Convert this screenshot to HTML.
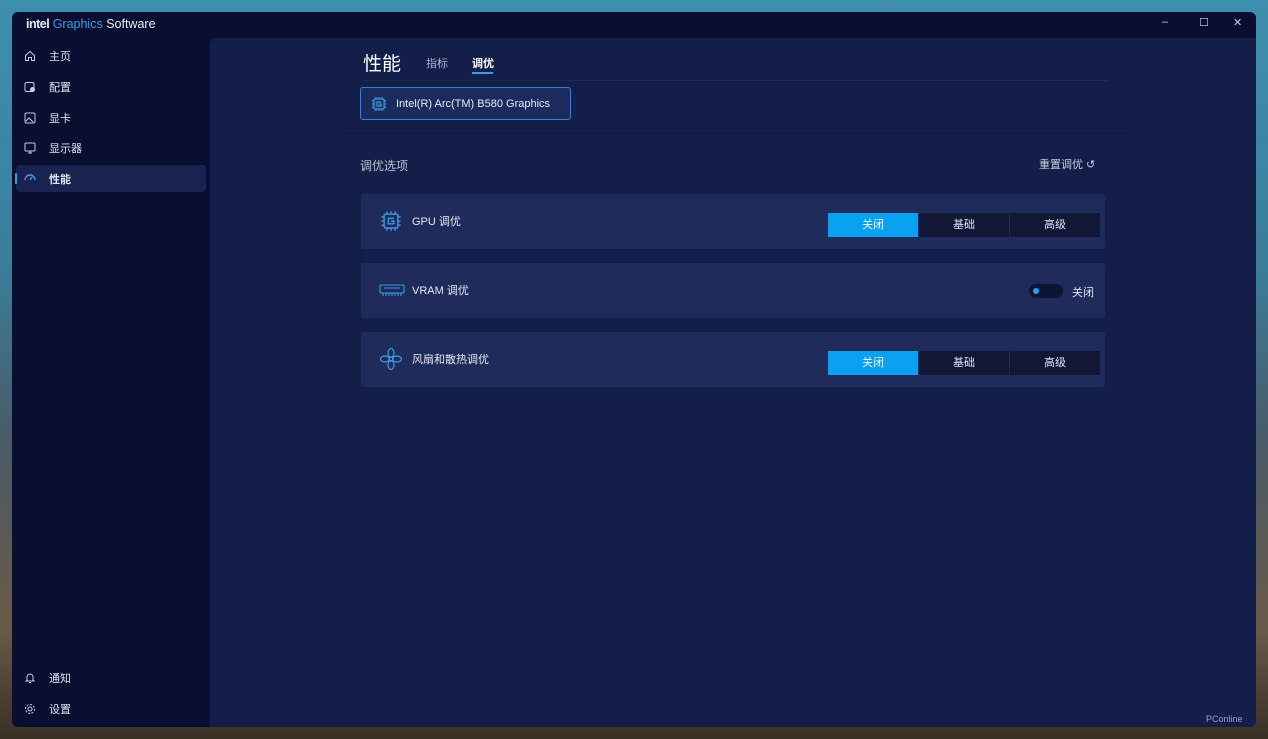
<!DOCTYPE html><html><head><meta charset="utf-8"><style>
*{margin:0;padding:0;box-sizing:border-box}
body{width:1268px;height:739px;overflow:hidden;position:relative;font-family:"Liberation Sans","Noto Sans CJK SC",sans-serif;background:linear-gradient(180deg,#3f8fb0 0%,#3a7f9c 35%,#4a5a66 60%,#6a5a48 85%,#3a3026 100%)}
.win{position:absolute;left:12px;top:12px;width:1244px;height:715px;background:#0a0e30;border-radius:6px;overflow:hidden}
.title{position:absolute;left:14px;top:5px;font-size:12.5px;color:#e8ecf5}
.title b{font-weight:bold;letter-spacing:-0.5px}.title span{color:#3d9be8}
.ctl{position:absolute;top:4px;color:#c8cfe0;font-size:11px}
.main{position:absolute;left:198px;top:26px;width:1046px;height:689px;background:#141f49;border-top-left-radius:6px}
.nav{position:absolute;left:4px;width:190px;height:27px;display:flex;align-items:center;font-size:11px;color:#dfe4f0;border-radius:4px}
.nav svg{position:absolute;left:8px}
.nav span{position:absolute;left:33px;top:6px}
.card{position:absolute;left:151px;width:744px;height:55px;background:#1f2b5b;border-radius:3px}
.card .lbl{position:absolute;left:51px;top:19px;font-size:11px;color:#e4e8f2}
.seg{position:absolute;left:467px;top:19px;display:flex}
.seg div{width:90px;height:24px;line-height:24px;text-align:center;font-size:11px;color:#dfe4f0;background:#111735;margin-right:1px}
.seg div.on{background:#0ba1f3;color:#fff}
</style></head><body>
<div class="win">
<div class="title"><b>intel</b> <span>Graphics</span> Software</div>
<div class="ctl" style="left:1150px">–</div>
<div class="ctl" style="left:1187px">☐</div>
<div class="ctl" style="left:1221px">✕</div>
<div class="nav" style="top:30px"><svg width="12" height="12" viewBox="0 0 12 12" fill="none" stroke="#c8cfe0"><path d="M1.5 5.5L6 1.5l4.5 4v5h-3v-3h-3v3h-3z"/></svg><span>主页</span></div>
<div class="nav" style="top:61px"><svg width="12" height="12" viewBox="0 0 12 12" fill="none" stroke="#c8cfe0"><rect x="1" y="1.5" width="9" height="9" rx="1.5"/><circle cx="8.5" cy="8.5" r="2" fill="#c8cfe0"/></svg><span>配置</span></div>
<div class="nav" style="top:92px"><svg width="12" height="12" viewBox="0 0 12 12" fill="none" stroke="#c8cfe0"><rect x="1" y="1" width="10" height="10" rx="1.5"/><path d="M2 9l3-3 4 4"/></svg><span>显卡</span></div>
<div class="nav" style="top:122px"><svg width="12" height="12" viewBox="0 0 12 12" fill="none" stroke="#c8cfe0"><rect x="1" y="1" width="10" height="8" rx="1"/><path d="M6 9v2M4 11h4"/></svg><span>显示器</span></div>
<div class="nav" style="top:153px;background:#1a2250"><div style="position:absolute;left:-1px;top:8px;width:2px;height:11px;background:#3d9be8;border-radius:1px"></div><svg width="12" height="12" viewBox="0 0 12 12" fill="none" stroke="#3d9be8" stroke-width="1.4"><path d="M1 7a5 5 0 0 1 10 0M6 7l2-3"/></svg><span style="font-weight:bold">性能</span></div>
<div class="nav" style="top:652px"><svg width="12" height="12" viewBox="0 0 12 12" fill="none" stroke="#c8cfe0"><path d="M3 8V5a3 3 0 0 1 6 0v3l1 1H2zM5 10.5h2"/></svg><span>通知</span></div>
<div class="nav" style="top:683px"><svg width="12" height="12" viewBox="0 0 12 12" fill="none" stroke="#c8cfe0"><circle cx="6" cy="6" r="2"/><circle cx="6" cy="6" r="4.5" stroke-dasharray="2 1.5"/></svg><span>设置</span></div>
<div class="main">
<div style="position:absolute;left:153px;top:11px;font-size:19px;color:#fff">性能</div>
<div style="position:absolute;left:216px;top:17px;font-size:11px;color:#aab3cc">指标</div>
<div style="position:absolute;left:262px;top:17px;font-size:11px;color:#fff;font-weight:bold">调优</div>
<div style="position:absolute;left:262px;top:34px;width:21px;height:2px;background:#3d9be8"></div>
<div style="position:absolute;left:153px;top:42px;width:745px;height:1px;background:#1f2a55"></div>
<div style="position:absolute;left:150px;top:49px;width:211px;height:33px;border:1px solid #3d7ed0;border-radius:3px;background:#1b2b5e"><svg style="position:absolute;left:10px;top:8px" width="16" height="16" viewBox="0 0 16 16" fill="none" stroke="#3d9be8" stroke-width="1.2"><rect x="3" y="3" width="10" height="10" rx="1"/><path d="M1 5h2M1 8h2M1 11h2M13 5h2M13 8h2M13 11h2M5 1v2M8 1v2M11 1v2M5 13v2M8 13v2M11 13v2M10 6H6v4h4V8H8"/></svg><span style="position:absolute;left:35px;top:10px;font-size:11px;color:#e8ecf5">Intel(R) Arc(TM) B580 Graphics</span></div>
<div style="position:absolute;left:132px;top:95px;width:784px;height:1px;background:#0f1838"></div>
<div style="position:absolute;left:150px;top:119px;font-size:12px;color:#b8c0d6">调优选项</div>
<div style="position:absolute;left:829px;top:118px;font-size:11px;color:#c8cfe0">重置调优 ↺</div>
<div class="card" style="top:156px"><svg style="position:absolute;left:19px;top:16px" width="22" height="22" viewBox="0 0 16 16" fill="none" stroke="#3d9be8" stroke-width="1"><rect x="3" y="3" width="10" height="10" rx="1"/><path d="M1 5h2M1 8h2M1 11h2M13 5h2M13 8h2M13 11h2M5 1v2M8 1v2M11 1v2M5 13v2M8 13v2M11 13v2M10 6H6v4h4V8H8"/></svg><div class="lbl">GPU 调优</div><div class="seg"><div class="on">关闭</div><div>基础</div><div>高级</div></div></div>
<div class="card" style="top:225px"><svg style="position:absolute;left:18px;top:20px" width="26" height="14" viewBox="0 0 26 14" fill="none" stroke="#3d9be8" stroke-width="1.1"><rect x="1" y="2" width="24" height="8" rx="1"/><path d="M4 10v3M7 10v3M10 10v3M13 10v3M16 10v3M19 10v3M22 10v3M5 5h16"/></svg><div class="lbl">VRAM 调优</div><div style="position:absolute;left:668px;top:21px;width:34px;height:14px;border-radius:7px;background:#0e1532"><div style="position:absolute;left:4px;top:4px;width:6px;height:6px;border-radius:3px;background:#2a9ce8"></div></div><div style="position:absolute;left:711px;top:21px;font-size:11px;color:#e4e8f2">关闭</div></div>
<div class="card" style="top:294px"><svg style="position:absolute;left:18px;top:15px" width="24" height="24" viewBox="0 0 24 24" fill="none" stroke="#3d9be8" stroke-width="1.2"><circle cx="12" cy="12" r="2"/><ellipse cx="12" cy="6" rx="3" ry="4.5"/><ellipse cx="12" cy="18" rx="3" ry="4.5"/><ellipse cx="6" cy="12" rx="4.5" ry="3"/><ellipse cx="18" cy="12" rx="4.5" ry="3"/></svg><div class="lbl">风扇和散热调优</div><div class="seg"><div class="on">关闭</div><div>基础</div><div>高级</div></div></div>
<div style="position:absolute;left:996px;top:676px;font-size:9px;color:#9aa4c0">PConline</div>
</div>
</div>
</body></html>
